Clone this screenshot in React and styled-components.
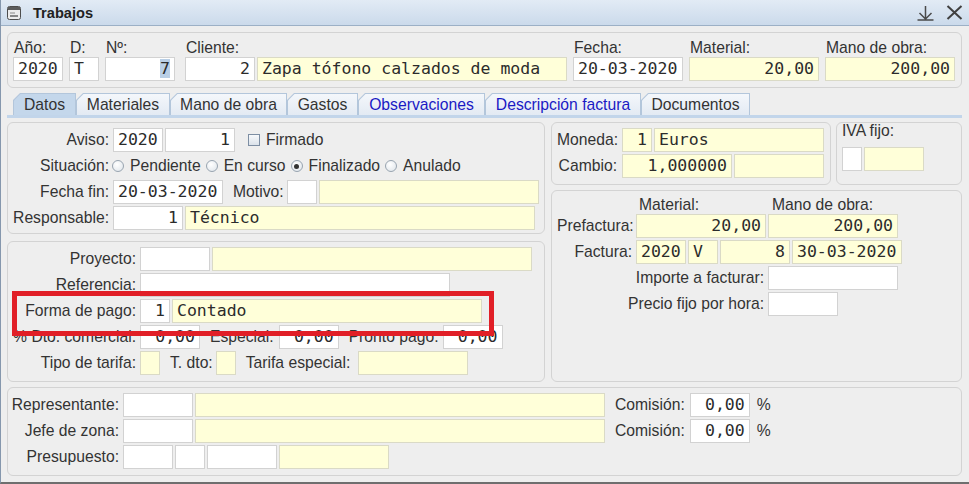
import React from 'react'
import styled, { createGlobalStyle } from 'styled-components'

const GlobalStyle = createGlobalStyle`
  html, body {
    margin: 0;
    padding: 0;
    background: #eeeeee;
  }
  body {
    font-family: "Liberation Sans", Arial, sans-serif;
    font-size: 15.7px;
    color: #333333;
  }
`

const Window = styled.div`
  width: 969px;
  height: 484px;
  box-sizing: border-box;
  border-left: 1px solid #8597ad;
  border-bottom: 2px solid #6e6e6e;
  background: #eeeeee;
  display: flex;
  flex-direction: column;
  overflow: hidden;
`

const TitleBar = styled.div`
  height: 25px;
  flex: none;
  display: flex;
  align-items: center;
  padding: 0 6px 0 6px;
  background: linear-gradient(#e2ebf5, #cbdaeb);
  border-bottom: 1px solid #9cb0c6;
  h1 {
    margin: 0 0 0 12px;
    font-size: 14.6px;
    font-weight: bold;
    color: #222;
    flex: 1;
  }
  svg {
    display: block;
  }
`

const TitleButtons = styled.div`
  display: flex;
  align-items: center;
  gap: 12px;
`

const Body = styled.div`
  flex: 1;
  display: flex;
  flex-direction: column;
  padding: 6px 7px 0 6px;
`

const Panel = styled.div`
  box-sizing: border-box;
  border: 1px solid #d3d3d3;
  border-radius: 6px;
  padding: ${p => p.$pad};
  position: relative;
  flex: ${p => (p.$grow ? 1 : 'none')};
  width: ${p => (p.$w ? `${p.$w}px` : 'auto')};
`

const HeaderPanel = styled(Panel)`
  display: flex;
  gap: 6px;
`

const HCol = styled.div`
  display: flex;
  flex-direction: column;
  margin-left: ${p => p.$ml || 0}px;
`

const HLabel = styled.div`
  height: 18px;
  line-height: 18px;
  padding-left: 1px;
  white-space: nowrap;
`

const Field = styled.div`
  box-sizing: border-box;
  flex: none;
  width: ${p => p.$w}px;
  height: 24px;
  border: 1px solid ${p => (p.$y ? '#dadac6' : '#d2d2d2')};
  background: ${p => (p.$y ? '#ffffd9' : '#ffffff')};
  font-family: "DejaVu Sans Mono", "Liberation Mono", monospace;
  font-size: 16.5px;
  line-height: 22px;
  color: #2b2b2b;
  padding: 0 4px;
  text-align: ${p => (p.$r ? 'right' : 'left')};
  white-space: nowrap;
  overflow: hidden;
`

const Selected = styled.span`
  background: #b9cfe6;
`

const Row = styled.div`
  display: flex;
  align-items: center;
  gap: 2px;
  height: ${p => p.$h || 24}px;
`

const Stack = styled.div`
  display: flex;
  flex-direction: column;
  gap: 2px;
`

const Label = styled.span`
  flex: none;
  width: ${p => (p.$w ? `${p.$w}px` : 'auto')};
  text-align: ${p => (p.$w ? 'right' : 'left')};
  margin: 0 ${p => p.$mr ?? 2}px 0 ${p => p.$ml || 0}px;
  line-height: 18px;
  white-space: nowrap;
`

const TabBar = styled.div`
  display: flex;
  padding-left: 6px;
  margin-top: 5px;
  height: 22px;
`

const TabOuter = styled.div`
  box-sizing: border-box;
  width: ${p => p.$w}px;
  height: 22px;
  padding: 1px 1px 0 1px;
  background: #b3c6db;
  clip-path: polygon(7px 0, 100% 0, 100% 100%, 0 100%, 0 7px);
`

const TabInner = styled.div`
  height: 100%;
  background: ${p => (p.$active ? '#c4d7eb' : 'linear-gradient(#f4f7fb, #e3eaf3)')};
  clip-path: polygon(6.5px 0, 100% 0, 100% 100%, 0 100%, 0 6.5px);
  text-align: center;
  line-height: 21px;
  color: ${p => (p.$blue ? '#1a1ac4' : '#333333')};
  white-space: nowrap;
`

const TabLine = styled.div`
  height: 3px;
  background: #c2d5ea;
`

const Content = styled.div`
  display: grid;
  grid-template-columns: 538px 1fr;
  gap: 6px;
  margin-top: 4px;
`

const Column = styled.div`
  display: flex;
  flex-direction: column;
  gap: ${p => p.$gap}px;
`

const PanelRow = styled.div`
  display: flex;
  gap: 5px;
`

const Check = styled.span`
  box-sizing: border-box;
  width: 12px;
  height: 12px;
  margin: 0 4px 0 11px;
  border: 1px solid #7d8ea3;
  background: linear-gradient(#f7f9fb, #dbe2ea);
`

const RadioItem = styled.span`
  display: flex;
  align-items: center;
  gap: 6px;
  margin-right: 3px;
  white-space: nowrap;
`

const Radio = styled.span`
  box-sizing: border-box;
  width: 12px;
  height: 12px;
  border-radius: 50%;
  border: 1px solid #98a4b0;
  background: radial-gradient(circle at 40% 35%, #ffffff, #dde3e9);
  display: flex;
  align-items: center;
  justify-content: center;
  &::after {
    content: '';
    width: 5px;
    height: 5px;
    border-radius: 50%;
    background: #333;
    display: ${p => (p.$on ? 'block' : 'none')};
  }
`

const Highlight = styled.div`
  position: absolute;
  left: 4px;
  top: 49px;
  width: 482px;
  height: 45px;
  box-sizing: border-box;
  border: 5px solid #e11f27;
  pointer-events: none;
`

const IvaLabel = styled.div`
  line-height: 18px;
  margin: -1px 0 7px 0;
`

const HeadCell = styled.span`
  flex: none;
  width: ${p => p.$w}px;
  line-height: 18px;
  white-space: nowrap;
`

const BottomPanel = styled(Panel)`
  margin-top: 5px;
`

const tabs = [
  { t: 'Datos', w: 63, active: true },
  { t: 'Materiales', w: 94 },
  { t: 'Mano de obra', w: 117 },
  { t: 'Gastos', w: 71 },
  { t: 'Observaciones', w: 127, blue: true },
  { t: 'Descripción factura', w: 156, blue: true },
  { t: 'Documentos', w: 109 },
]

function WinIcon() {
  return (
    <svg width="14" height="14" viewBox="0 0 14 14">
      <rect x="0.5" y="0.5" width="13" height="13" rx="2" fill="#ececec" stroke="#4d4d4d" />
      <rect x="1" y="1" width="12" height="3" fill="#5c5c5c" />
      <line x1="3" y1="7" x2="8" y2="7" stroke="#8a8a8a" strokeWidth="1" />
      <line x1="3" y1="10" x2="11" y2="10" stroke="#5c5c5c" strokeWidth="1.4" />
    </svg>
  )
}

function DockIcon() {
  return (
    <svg width="17" height="16" viewBox="0 0 17 16">
      <path d="M8.5 1 V14 M2.5 8 L8.5 14 L14.5 8 M0.5 15 H16.5" fill="none" stroke="#4a4a4a" strokeWidth="1.5" />
    </svg>
  )
}

function CloseIcon() {
  return (
    <svg width="17" height="15" viewBox="0 0 17 15">
      <path d="M1.5 1 L15.5 14 M15.5 1 L1.5 14" fill="none" stroke="#404040" strokeWidth="2" />
    </svg>
  )
}

export default function App() {
  return (
    <>
      <GlobalStyle />
      <Window>
        <TitleBar>
          <WinIcon />
          <h1>Trabajos</h1>
          <TitleButtons>
            <DockIcon />
            <CloseIcon />
          </TitleButtons>
        </TitleBar>
        <Body>
          <HeaderPanel $pad="6px 6px 6px 5px">
            <HCol>
              <HLabel>Año:</HLabel>
              <Field $w={50}>2020</Field>
            </HCol>
            <HCol>
              <HLabel>D:</HLabel>
              <Field $w={30}>T</Field>
            </HCol>
            <HCol>
              <HLabel>Nº:</HLabel>
              <Field $w={70} $r><Selected>7</Selected></Field>
            </HCol>
            <HCol $ml={4}>
              <HLabel>Cliente:</HLabel>
              <Row>
                <Field $w={70} $r>2</Field>
                <Field $w={310} $y>Zapa tófono calzados de moda</Field>
              </Row>
            </HCol>
            <HCol>
              <HLabel>Fecha:</HLabel>
              <Field $w={110}>20-03-2020</Field>
            </HCol>
            <HCol>
              <HLabel>Material:</HLabel>
              <Field $w={130} $y $r>20,00</Field>
            </HCol>
            <HCol>
              <HLabel>Mano de obra:</HLabel>
              <Field $w={130} $y $r>200,00</Field>
            </HCol>
          </HeaderPanel>

          <TabBar>
            {tabs.map(tab => (
              <TabOuter key={tab.t} $w={tab.w}>
                <TabInner $active={tab.active} $blue={tab.blue}>{tab.t}</TabInner>
              </TabOuter>
            ))}
          </TabBar>
          <TabLine />

          <Content>
            <Column $gap={7}>
              <Panel $pad="5px 4px 3px 3px">
                <Stack>
                  <Row>
                    <Label $w={98}>Aviso:</Label>
                    <Field $w={50}>2020</Field>
                    <Field $w={70} $r>1</Field>
                    <Check />
                    <span>Firmado</span>
                  </Row>
                  <Row>
                    <Label $w={98} $mr={1}>Situación:</Label>
                    <RadioItem><Radio />Pendiente</RadioItem>
                    <RadioItem><Radio />En curso</RadioItem>
                    <RadioItem><Radio $on />Finalizado</RadioItem>
                    <RadioItem><Radio />Anulado</RadioItem>
                  </Row>
                  <Row>
                    <Label $w={98}>Fecha fin:</Label>
                    <Field $w={110}>20-03-2020</Field>
                    <Label $ml={8} $mr={1}>Motivo:</Label>
                    <Field $w={30} />
                    <Field $w={220} $y />
                  </Row>
                  <Row>
                    <Label $w={98}>Responsable:</Label>
                    <Field $w={70} $r>1</Field>
                    <Field $w={350} $y>Técnico</Field>
                  </Row>
                </Stack>
              </Panel>

              <Panel $pad="5px 4px 6px 3px">
                <Stack>
                  <Row>
                    <Label $w={125}>Proyecto:</Label>
                    <Field $w={70} />
                    <Field $w={320} $y />
                  </Row>
                  <Row>
                    <Label $w={125}>Referencia:</Label>
                    <Field $w={310} />
                  </Row>
                  <Row>
                    <Label $w={125}>Forma de pago:</Label>
                    <Field $w={30} $r>1</Field>
                    <Field $w={310} $y>Contado</Field>
                  </Row>
                  <Row>
                    <Label $w={125}>% Dto. comercial:</Label>
                    <Field $w={60} $r>0,00</Field>
                    <Label $ml={8} $mr={3}>Especial:</Label>
                    <Field $w={60} $r>0,00</Field>
                    <Label $ml={8} $mr={2}>Pronto pago:</Label>
                    <Field $w={60} $r>0,00</Field>
                  </Row>
                  <Row>
                    <Label $w={125}>Tipo de tarifa:</Label>
                    <Field $w={20} $y />
                    <Label $ml={8} $mr={1}>T. dto:</Label>
                    <Field $w={20} $y />
                    <Label $ml={8} $mr={6}>Tarifa especial:</Label>
                    <Field $w={110} $y />
                  </Row>
                </Stack>
                <Highlight />
              </Panel>
            </Column>

            <Column $gap={5}>
              <PanelRow>
                <Panel $w={280} $pad="5px 4px 6px 5px">
                  <Stack>
                    <Row>
                      <Label $w={60} $mr={3}>Moneda:</Label>
                      <Field $w={30} $y $r>1</Field>
                      <Field $w={170} $y>Euros</Field>
                    </Row>
                    <Row>
                      <Label $w={60} $mr={3}>Cambio:</Label>
                      <Field $w={110} $y $r>1,000000</Field>
                      <Field $w={90} $y />
                    </Row>
                  </Stack>
                </Panel>
                <Panel $grow $pad="0 4px 6px 5px">
                  <IvaLabel>IVA fijo:</IvaLabel>
                  <Row>
                    <Field $w={20} />
                    <Field $w={60} $y />
                  </Row>
                </Panel>
              </PanelRow>

              <Panel $grow $pad="5px 4px 6px 5px">
                <Row $h={18}>
                  <HeadCell $w={80} />
                  <HeadCell $w={131}>Material:</HeadCell>
                  <HeadCell $w={140}>Mano de obra:</HeadCell>
                </Row>
                <Stack>
                  <Row>
                    <Label $w={75}>Prefactura:</Label>
                    <Field $w={130} $y $r>20,00</Field>
                    <Field $w={130} $y $r>200,00</Field>
                  </Row>
                  <Row>
                    <Label $w={75}>Factura:</Label>
                    <Field $w={50} $y>2020</Field>
                    <Field $w={30} $y>V</Field>
                    <Field $w={70} $y $r>8</Field>
                    <Field $w={110} $y>30-03-2020</Field>
                  </Row>
                  <Row>
                    <Label $w={207}>Importe a facturar:</Label>
                    <Field $w={130} />
                  </Row>
                  <Row>
                    <Label $w={207}>Precio fijo por hora:</Label>
                    <Field $w={70} />
                  </Row>
                </Stack>
              </Panel>
            </Column>
          </Content>

          <BottomPanel $pad="5px 4px 6px 1px">
            <Stack>
              <Row>
                <Label $w={110}>Representante:</Label>
                <Field $w={70} />
                <Field $w={410} $y />
                <Label $ml={8} $mr={3}>Comisión:</Label>
                <Field $w={60} $r>0,00</Field>
                <Label $ml={5}>%</Label>
              </Row>
              <Row>
                <Label $w={110}>Jefe de zona:</Label>
                <Field $w={70} />
                <Field $w={410} $y />
                <Label $ml={8} $mr={3}>Comisión:</Label>
                <Field $w={60} $r>0,00</Field>
                <Label $ml={5}>%</Label>
              </Row>
              <Row>
                <Label $w={110}>Presupuesto:</Label>
                <Field $w={50} />
                <Field $w={30} />
                <Field $w={70} />
                <Field $w={110} $y />
              </Row>
            </Stack>
          </BottomPanel>
        </Body>
      </Window>
    </>
  )
}
